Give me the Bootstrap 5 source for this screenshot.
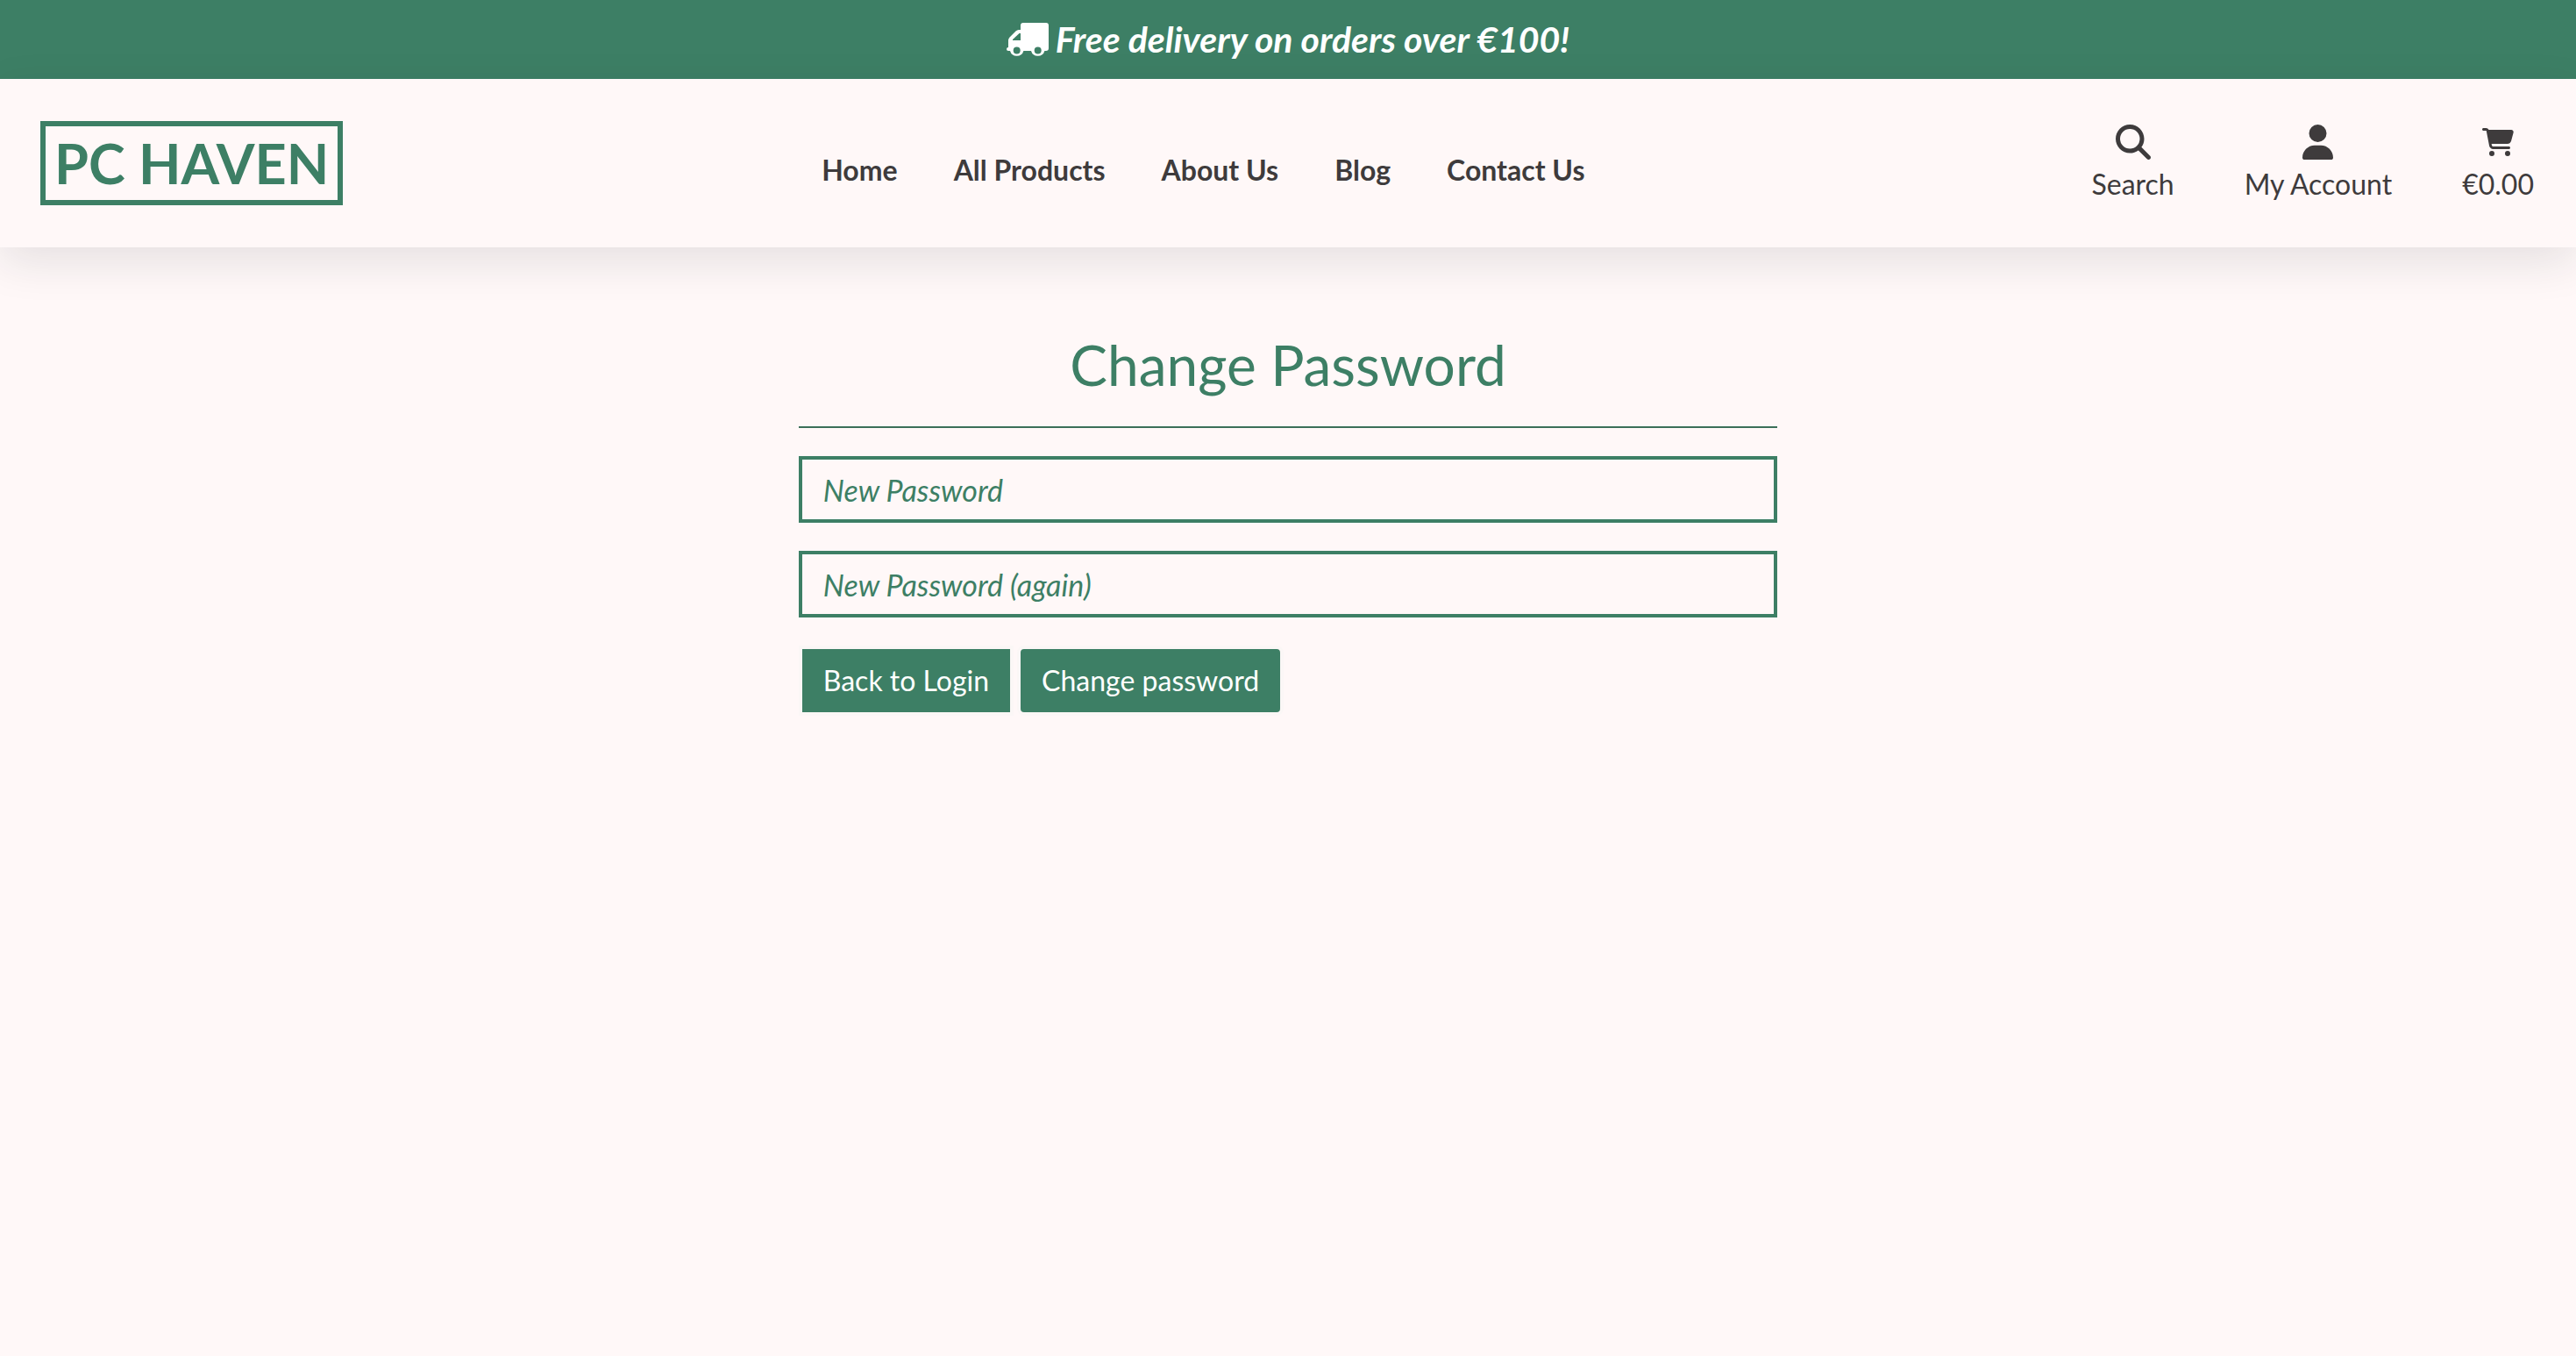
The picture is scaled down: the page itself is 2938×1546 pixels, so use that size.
<!DOCTYPE html>
<html lang="en">
<head>
<meta charset="utf-8">
<meta name="viewport" content="width=device-width, initial-scale=1">
<title>PC Haven | Change Password</title>
<link href="https://cdn.jsdelivr.net/npm/bootstrap@5.3.0/dist/css/bootstrap.min.css" rel="stylesheet">
<style>
:root { --haven-green: #3d7f65; --haven-ink: #3e3b3c; --haven-bg: #fff8f8; }
body { font-family: Lato, sans-serif; font-size: 32px; line-height: 48px; color: var(--haven-ink); background: var(--haven-bg); }
a { color: inherit; text-decoration: none; }
svg { display: block; fill: currentColor; }
.promo-bar { height: 90px; background: var(--haven-green); color: #fff; font-size: 41px; font-weight: 700; font-style: italic; }
.site-header { height: 192px; padding: 0 48px 0 46px; background: var(--haven-bg); box-shadow: 0 16px 48px rgba(20, 37, 45, .11); }
.brand-box { border: 6px solid var(--haven-green); color: var(--haven-green); font-size: 63px; font-weight: 700; line-height: 84px; padding: 0 10px; }
.main-links { gap: 64px; font-weight: 700; padding: 16px 32px 0 0; }
.tool-links { gap: 80px; padding-top: 4px; }
.tool-icon { height: 40px; margin-bottom: 4px; }
.form-panel { width: 38%; padding-top: 96px; }
.form-panel h1 { font-size: 64px; font-weight: 400; line-height: 76px; color: var(--haven-green); margin: 0 0 32px; }
.form-panel hr { border-top: 2px solid #3c6f59; opacity: 1; margin: 0 0 32px; }
.form-panel .form-control { height: 76px; border: 4px solid var(--haven-green); border-radius: 0; background: var(--haven-bg); padding: 0 24px; font-size: 34px; margin-bottom: 32px; color: var(--haven-green); }
.form-panel .form-control::placeholder { color: var(--haven-green); font-style: italic; opacity: 1; }
.haven-btn { height: 80px; padding: 0 24px; border: 4px solid #fbf7f6; background: var(--haven-green); color: #fff; font-size: 32px; line-height: 72px; border-radius: 0; }
.haven-btn-round { border-radius: 8px; }
</style>
</head>
<body>
<div class="promo-bar d-flex align-items-center justify-content-center gap-2">
  <svg width="48" height="40" viewBox="0 0 48 40" aria-hidden="true"><path fill-rule="evenodd" d="M19 1H45Q48 1 48 4V30Q48 33 45 33H43.400A8 8 0 0 1 28 33H19.400A8 8 0 0 1 4 33H2Q0 33 0 31T2 29V21Q2 19 3.500 17.500L10.500 10.500Q12 9 14 9H16V4Q16 1 19 1ZM16 13H14.500L7 20V21H16ZM11.700 28.500a4 4 0 1 0 0 8 4 4 0 1 0 0-8ZM35.700 28.500a4 4 0 1 0 0 8 4 4 0 1 0 0-8Z"/></svg>
  <span>Free delivery on orders over €100!</span>
</div>
<header class="site-header d-flex align-items-center justify-content-between">
  <a class="brand-box" href="#">PC HAVEN</a>
  <nav class="main-links d-flex" aria-label="Main">
    <a href="#">Home</a>
    <a href="#">All Products</a>
    <a href="#">About Us</a>
    <a href="#">Blog</a>
    <a href="#">Contact Us</a>
  </nav>
  <div class="tool-links d-flex">
    <a href="#" class="d-flex flex-column align-items-center">
      <span class="tool-icon d-flex align-items-center"><svg width="40" height="40" viewBox="0 0 512 512" aria-hidden="true"><path d="M416 208c0 45.900-14.900 88.300-40 122.700L502.600 457.400c12.500 12.500 12.500 32.800 0 45.300s-32.800 12.500-45.300 0L330.700 376c-34.400 25.200-76.800 40-122.700 40C93.100 416 0 322.900 0 208S93.100 0 208 0S416 93.100 416 208zM208 352a144 144 0 1 0 0-288 144 144 0 1 0 0 288z"/></svg></span>
      Search
    </a>
    <a href="#" class="d-flex flex-column align-items-center">
      <span class="tool-icon d-flex align-items-center"><svg width="35" height="40" viewBox="0 0 448 512" aria-hidden="true"><path d="M224 256A128 128 0 1 0 224 0a128 128 0 1 0 0 256zm-45.700 48C79.800 304 0 383.800 0 482.300C0 498.700 13.300 512 29.700 512H418.300c16.400 0 29.700-13.300 29.700-29.700C448 383.800 368.200 304 269.700 304H178.300z"/></svg></span>
      My Account
    </a>
    <a href="#" class="d-flex flex-column align-items-center">
      <span class="tool-icon d-flex align-items-center"><svg width="36" height="32" viewBox="0 0 576 512" aria-hidden="true"><path d="M0 24C0 10.700 10.700 0 24 0H69.500c22 0 41.500 12.800 50.600 32h411c26.300 0 45.500 25 38.600 50.400l-41 152.300c-8.500 31.400-37 53.300-69.500 53.300H170.700l5.400 28.500c2.200 11.300 12.100 19.500 23.600 19.500H488c13.300 0 24 10.700 24 24s-10.700 24-24 24H199.700c-34.600 0-64.300-24.600-70.700-58.500L77.400 54.500c-.7-3.800-4-6.500-7.900-6.500H24C10.700 48 0 37.300 0 24zM128 464a48 48 0 1 1 96 0 48 48 0 1 1-96 0zm336-48a48 48 0 1 1 0 96 48 48 0 1 1 0-96z"/></svg></span>
      €0.00
    </a>
  </div>
</header>
<main class="d-flex justify-content-center">
  <div class="form-panel">
    <h1 class="text-center">Change Password</h1>
    <hr>
    <form>
      <input class="form-control" type="password" placeholder="New Password" aria-label="New Password">
      <input class="form-control" type="password" placeholder="New Password (again)" aria-label="New Password (again)">
      <div class="d-flex gap-1">
        <a class="btn haven-btn" href="#">Back to Login</a>
        <button class="btn haven-btn haven-btn-round" type="submit">Change password</button>
      </div>
    </form>
  </div>
</main>
<script src="https://cdn.jsdelivr.net/npm/bootstrap@5.3.0/dist/js/bootstrap.bundle.min.js"></script>
</body>
</html>
